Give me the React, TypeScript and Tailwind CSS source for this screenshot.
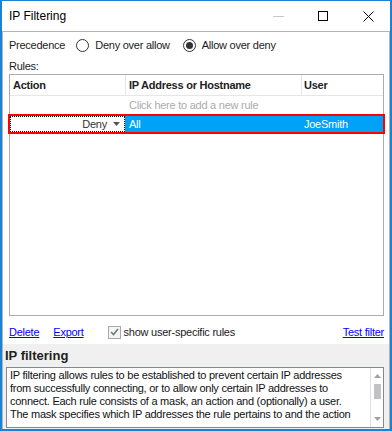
import React from "react";

const BLUE = "bg-[#00a2f8]";

function Radio({ checked }: { checked?: boolean }) {
  return (
    <span className="w-[13px] h-[13px] rounded-full border border-[#333] bg-white flex items-center justify-center shrink-0">
      {checked && <span className="w-[7px] h-[7px] rounded-full bg-[#333]" />}
    </span>
  );
}

export default function App() {
  return (
    <div className="w-[392px] h-[431px] bg-white border-x-2 border-t border-b-2 border-[#1883d7] flex flex-col font-['Liberation_Sans',Arial,sans-serif] text-[11px] tracking-[-0.25px] text-[#1b1b1b] overflow-hidden">
      {/* title bar */}
      <div className="h-[30px] shrink-0 flex items-center pl-[7px] tracking-normal">
        <span className="text-[12px] text-black">IP Filtering</span>
        <div className="ml-auto flex items-center h-full">
          <span className="w-[11px] h-px bg-[#c8c8c8] mr-[34px]" />
          <span className="w-[10px] h-[10px] border border-black mr-[35px]" />
          <svg width="11" height="11" viewBox="0 0 11 11" className="mr-[16px]">
            <path d="M0.5 0.5 L10.5 10.5 M10.5 0.5 L0.5 10.5" stroke="#000" strokeWidth="1" />
          </svg>
        </div>
      </div>

      <div className="flex-1 flex flex-col border-x border-t border-[#b4b4b4] min-h-0">
        <div className="pl-[6px] pr-[5px] flex flex-col">
          {/* precedence */}
          <div className="mt-[3px] h-[20px] flex items-center">
            <span>Precedence</span>
            <span className="ml-[11px]"><Radio /></span>
            <span className="ml-[6px]">Deny over allow</span>
            <span className="ml-[13px]"><Radio checked /></span>
            <span className="ml-[6px]">Allow over deny</span>
          </div>
          <div className="mt-[5px] h-[13px] leading-[13px]">Rules:</div>

          {/* rules grid */}
          <div className="mt-px h-[242px] border border-[#acacac] flex flex-col">
            <div className="h-[21px] flex border-b border-[#e6e6e6] font-bold text-[#222]">
              <div className="w-[116px] border-r border-[#e6e6e6] pl-[3px] flex items-center">Action</div>
              <div className="w-[176px] border-r border-[#e6e6e6] pl-[3px] flex items-center">IP Address or Hostname</div>
              <div className="flex-1 pl-[2px] flex items-center">User</div>
            </div>
            <div className="h-[18px] flex items-center">
              <div className="w-[116px]" />
              <div className="pl-[3px] text-[#ababab]">Click here to add a new rule</div>
            </div>
            <div className="-mx-[2px] h-[20px] border-2 border-[#ff0000] flex">
              <div className="w-[115px] border border-dotted border-black bg-white flex items-center justify-end pr-[4px] text-[#333]">
                <span>Deny</span>
                <svg width="7" height="4" viewBox="0 0 7 4" className="ml-[6px]">
                  <path d="M0 0 H7 L3.5 4 Z" fill="#555" />
                </svg>
              </div>
              <div className={`w-[177px] ${BLUE} text-white pl-[4px] flex items-center`}>All</div>
              <div className={`flex-1 ${BLUE} text-white pl-[2px] flex items-center`}>JoeSmith</div>
            </div>
          </div>

          {/* links */}
          <div className="h-[28px] pt-[4px] flex items-center">
            <span className="text-[#0000ff] underline">Delete</span>
            <span className="ml-[14px] text-[#0000ff] underline">Export</span>
            <span className="ml-[24px] w-[13px] h-[13px] border border-[#a8a8a8] bg-[#f4f4f4] flex items-center justify-center">
              <svg width="9" height="8" viewBox="0 0 9 8">
                <path d="M1 4 L3.5 6.5 L8 1" stroke="#777" strokeWidth="1.6" fill="none" />
              </svg>
            </span>
            <span className="ml-[3px]">show user-specific rules</span>
            <span className="ml-auto text-[#0000ff] underline">Test filter</span>
          </div>
        </div>

        {/* help panel */}
        <div className="flex-1 bg-[#f0f0f0] pl-[2px] pr-[5px] flex flex-col">
          <div className="h-[23px] flex items-center font-bold text-[13px] tracking-normal text-[#222]">IP filtering</div>
          <div className="ml-px h-[61px] border border-[#828790] bg-white flex overflow-hidden">
            <div className="flex-1 pl-[3px] pt-px leading-[13px] text-[#111] whitespace-nowrap overflow-hidden">
              <div>IP filtering allows rules to be established to prevent certain IP addresses</div>
              <div>from successfully connecting, or to allow only certain IP addresses to</div>
              <div>connect. Each rule consists of a mask, an action and (optionally) a user.</div>
              <div>The mask specifies which IP addresses the rule pertains to and the action</div>
            </div>
            <div className="w-[13px] border-l border-[#e0e0e0] flex flex-col items-center">
              <svg width="7" height="4" viewBox="0 0 7 4" className="mt-[6px]">
                <path d="M0 4 H7 L3.5 0 Z" fill="#a0a0a0" />
              </svg>
              <div className="mt-[6px] w-[7px] h-[15px] bg-[#c2c2c2]" />
              <svg width="7" height="4" viewBox="0 0 7 4" className="mt-auto mb-[6px]">
                <path d="M0 0 H7 L3.5 4 Z" fill="#a0a0a0" />
              </svg>
            </div>
          </div>
        </div>
      </div>
    </div>
  );
}
